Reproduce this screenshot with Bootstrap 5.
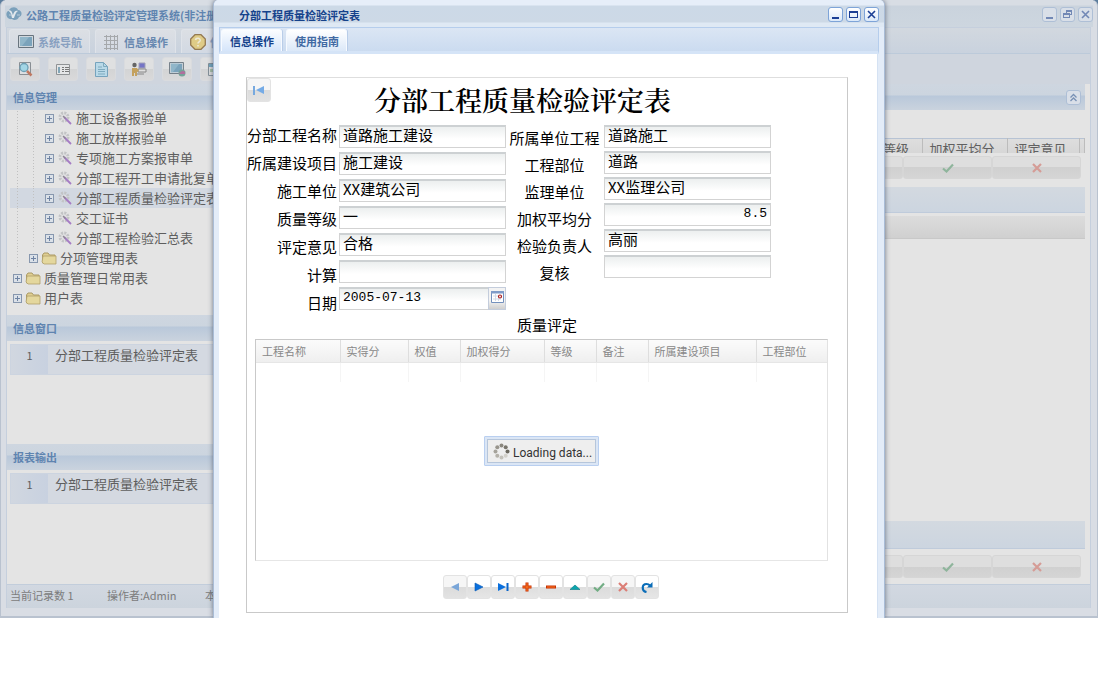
<!DOCTYPE html>
<html lang="zh-CN">
<head>
<meta charset="utf-8">
<meta name="viewport" content="width=device-width, initial-scale=1">
<title>分部工程质量检验评定表</title>
<link href="https://cdn.jsdelivr.net/npm/bootstrap@5.3.0/dist/css/bootstrap.min.css" rel="stylesheet">
<style>
body{font-family:"Noto Sans CJK SC","Noto Sans",sans-serif;font-size:11px;line-height:16px;background:#fff;color:#666}
button,input{font:inherit;border-radius:0}
ul,h1,h2{margin:0;padding:0;list-style:none}
svg{display:block;flex:none}
.desktop{display:grid;grid-template-columns:minmax(0,1fr);background:#5c7d9d}
.desktop>*{grid-area:1/1}

/* main window, dimmed */
.main-win{background:#d9dde4;border:1px solid #b9c2cf;border-width:0 1px 2px;border-radius:6px 6px 0 0;padding:0 6px 8px 5px}
.win-title{height:27px;font-weight:700;color:#5f84b0;background:linear-gradient(#d8dde4 0 5px,#cad3dd 6px,#cdd6df);margin:0 -2px 0 -1px;padding-left:1px}
.win-title>span,.dlg-title>span{padding-top:2px}
.tool-sq{width:15px;height:15px;border:1px solid #aebfd6;border-radius:3px;background:#d9dfe8;padding:0;display:grid;place-items:center}
.main-body{background:#e4e4e4;border:1px solid #c5cfdd;border-width:1px 1px 0;padding-right:5px}
.strip{height:26px;background:linear-gradient(#d2d8df,#c9d2de);border-bottom:1px solid #bccada;margin-right:-5px;padding-left:2px;gap:5px}
.tab-btn{height:24px;border:1px solid #dfe3e9;border-bottom:0;border-radius:3px 3px 0 0;background:linear-gradient(#dcdfe4,#d2d9e3);color:#88a0c0;font-weight:700;padding:0 7px 0 8px;margin-top:1px;gap:4px}
.tab-btn.on{color:#6788b0}
.tools{height:30px;background:#cfd5de;padding:3px 3px 0;margin-right:-5px}
.tool-btn{width:30px;height:24px;border:1px solid #d9dbde;border-radius:3px;background:linear-gradient(#dfe0e1 50%,#d3d4d5 50%,#d9d9da);padding:0;display:grid;place-items:center}
.side{width:236px;flex:none}
.bar{height:26px;font-size:11px;line-height:26px;font-weight:700;color:#5f84b0;padding:0 6px;background:linear-gradient(#ced6e0 0,#ccd5df 11px,#b9c8da 12px,#cad3de)}
.tree{height:205px;overflow:hidden;color:#5e5e5e;font-size:13px;white-space:nowrap}
.tree ul{margin-top:-2px}
.tree li{height:20px;line-height:20px;display:flex;align-items:center;gap:4px;margin-left:3px}
.tree li.l3{padding-left:35px;background:repeating-linear-gradient(#c0c0c0 0 1px,transparent 1px 3px) 7px 0/1px 20px no-repeat,repeating-linear-gradient(#c0c0c0 0 1px,transparent 1px 3px) 23px 0/1px 20px no-repeat}
.tree li.l2{padding-left:19px;background:repeating-linear-gradient(#c0c0c0 0 1px,transparent 1px 3px) 7px 0/1px 20px no-repeat}
.tree li.l1{padding-left:3px}
.tree li.pick{background-color:#d2d8e1}
.tree .fold{gap:3px}
.pm{width:9px;height:9px;border:1px solid #8797ae;background:linear-gradient(#6f83a3,#6f83a3) center/5px 1px no-repeat,linear-gradient(#6f83a3,#6f83a3) center/1px 5px no-repeat,#dbe1e8;flex:none}
.pane{height:103px;padding:3px 0 0 3px}
.pane-row{height:31px;background:#d4d9e1;border:1px solid #ccd4e0;font-size:13px;line-height:20px;color:#5e5e5e}
.pane-no{width:37px;background:linear-gradient(90deg,#d1d7e0,#c8d1e0);text-align:center;font-size:11px}
.pane-name{padding-left:7px}
.bar-foot{height:24px;line-height:21px;background:linear-gradient(#d2d8e1,#ccd4dd);border-top:1px solid #c2cddb;color:#7c7c7c;padding-left:3px;margin-right:-5px}
.foot-a{width:97px}.foot-b{width:98px}
.rest{min-width:0}
.cutgrid{width:202px;height:16px;border-top:1px solid #b7c3d4;background:linear-gradient(#dedede,#d4d4d4);font-size:13px;line-height:20px;color:#606060;table-layout:fixed;white-space:nowrap}
.cutgrid th{font-weight:400;padding:0 0 0 7px;border-right:1px solid #bcbcbc}
.cut-view{height:15px}
.wide-btn{width:89px;height:23px;border:1px solid #d6d6d6;border-radius:3px;background:linear-gradient(#dedede 50%,#d0d0d0 50%,#d5d5d5);display:grid;place-items:center;padding:0}
.wide-head{height:23px;background:linear-gradient(#dcdcdc,#d0d0d0);border-bottom:1px solid #c8c8c8;margin-top:3px}
.r-acts{margin:3px 4px 0 0}
.r-acts.low{margin:6px 4px 6px 0}
.bar-flat{background:linear-gradient(#d3d9e0,#ccd5e0);border-bottom:1px solid #bfcbdb}
.bar-flat.tall{height:28px}

/* dialog */
.dlg{justify-self:center;width:672px;max-width:100%;background:#e3ecf8;border:1px solid #a9bcd6;border-width:0 1px;border-radius:5px 5px 0 0;box-shadow:0 0 5px rgba(60,70,90,.7);clip-path:inset(0 -8px 0 -8px);padding:0 5px}
.dlg-title{height:27px;margin:0 -5px;padding:0 5px 0 25px;font-size:11px;line-height:16px;font-weight:700;color:#15428b;background:linear-gradient(#e6eef9 0 5px,#ccd9e7 6px,#cdd9e6 22px,#dfe9f4 23px);border-radius:5px 5px 0 0}
.dlg .tool-sq{border-color:#7ea4d8;background:linear-gradient(#fff,#dbe9f9)}
.dlg-tabs{height:27px;background:linear-gradient(#dbe6f4,#cbdbf0);border:1px solid #b5cdec;border-bottom:3px solid #d5e4f7;padding-left:1px}
.dlg-tabs .tab-btn{height:22px;margin-top:1px;border-color:#f6faff;background:linear-gradient(#fff,#dbe8f8);color:#416aa3;box-shadow:1px 0 0 #b9cde8}
.dlg-tabs .tab-btn.on{color:#15428b;background:linear-gradient(#fbfdff,#d5e5fa)}
.dlg-body{background:#fff;border-right:1px solid #d5e2f3;margin-right:1px;padding:23px 29px 5px 27px;color:#000}
.sheet{border:1px solid #c9c9c9;border-top-color:#dedede;height:536px}
.sheet-head{height:47px}
.nav-b{width:24px;height:24px;border:1px solid #e3e3e3;border-radius:3px;background:linear-gradient(#fff 52%,#dedede 52%,#e6e6e6);padding:0;display:grid;place-items:center}
.nav-b:disabled{background:linear-gradient(#f6f6f6 52%,#dcdcdc 52%,#e2e2e2)}
.sheet-title{font-family:"Noto Serif CJK SC","Noto Sans CJK SC",serif;font-size:27px;line-height:44px;font-weight:600;color:#000;padding-left:103px;white-space:nowrap}
.fields{font-size:15px;height:190px}
.fields label{height:20px;line-height:20px;white-space:nowrap}
.lab-l{width:92px;gap:8px;align-items:flex-end;padding-right:2px}
.lab-r{width:98px;gap:7px;align-items:center;padding-right:1px;margin-top:3px}
.in-l{width:167px;gap:4px}
.in-r{width:167px;gap:3px}
.txt{width:100%;height:23px;border:1px solid #d3d3d3;border-top:2px solid #cdd1d3;background:linear-gradient(#ecefef,#fff 12px);padding:0 3px 5px;font-size:15px;line-height:15px;color:#000;outline:0}
.txt.mono{font-family:"Liberation Mono","Noto Sans CJK SC",monospace;font-size:13px;padding-bottom:3px}
.date-box{border-right:1px solid #c4cddc}
.date-box .txt{border-right:0}
.pick-date{width:17px;height:23px;border:1px solid #c4cddc;border-width:1px 0 1px 1px;background:linear-gradient(#f3f3f3 60%,#cfcfcf);padding:3px 0 0;display:grid;place-items:start center;flex:none}
.sub-title{font-size:15px;line-height:20px;font-weight:400;padding-left:270px}
.grid-box{margin:4px 19px 0 8px;height:222px;border:1px solid #c9c9c9;border-right-color:#e2e2e2;border-bottom-color:#e6e6e6}
.data-grid{width:100%;table-layout:fixed;color:#888}
.data-grid th{height:22px;font-weight:400;line-height:16px;padding:0 0 0 6px;border-right:1px solid #dedede;border-bottom:1px solid #e6e6e6;background:linear-gradient(#fbfbfb,#efefef);white-space:nowrap}
.data-grid td{height:20px;padding:0;border-right:1px solid #f5f5f5}
.data-grid tr>:last-child{border-right:0}
.busy{width:115px;height:30px;margin:54px auto 0;border:1px solid #b9cff0;background:#dbe6f5;padding:2px;border-radius:1px}
.busy-in{height:24px;border:1px solid #b6c6db;background:#eee;color:#333;padding:0 0 0 5px;gap:3px}
.busy-in span{padding-top:3px;font-family:Roboto,"Noto Sans",sans-serif;font-size:12px;white-space:nowrap}
.pager{margin:14px 0 0 196px}
</style>
</head>
<body>
<svg width="0" height="0" class="d-none" aria-hidden="true">
<symbol id="i-min" viewBox="0 0 11 11"><path d="M2 8h7v2H2z" fill="currentColor"/></symbol>
<symbol id="i-max" viewBox="0 0 11 11"><path d="M1 2h9v7H1zM2 4v4h7V4z" fill="currentColor" fill-rule="evenodd"/></symbol>
<symbol id="i-res" viewBox="0 0 11 11"><path d="M4 1h6v5H8v3H1V4h3zM5 3v1h3v1h1V3zM2 6v2h5V6z" fill="currentColor" fill-rule="evenodd"/></symbol>
<symbol id="i-cls" viewBox="0 0 11 11"><path d="M2 2l7 7M9 2l-7 7" stroke="currentColor" stroke-width="1.6"/></symbol>
<symbol id="i-chk" viewBox="0 0 12 10"><path d="M1 5.5L4.5 8.500L11 1.500" fill="none" stroke="currentColor" stroke-width="2.2"/></symbol>
<symbol id="i-x" viewBox="0 0 10 10"><path d="M1 1l8 8M9 1L1 9" stroke="currentColor" stroke-width="2.2"/></symbol>
<symbol id="i-gear" viewBox="0 0 14 14"><circle cx="6" cy="6" r="4" fill="none" stroke="#c3c4c6" stroke-width="3" stroke-dasharray="2 1.1"/><circle cx="6" cy="6" r="2.500" fill="#e0e0e2"/><path d="M6 6l7 7" stroke="#a57cc4" stroke-width="1.800"/><path d="M5 5l2.500 2.500" stroke="#8d8a92" stroke-width="1.200"/></symbol>
<symbol id="i-fold" viewBox="0 0 16 13"><path d="M1.500 11V3l1.500-2h4L8.500 3H14v8z" fill="#e0cf92" stroke="#ab9a65"/><path d="M2 4h13v8H3L1 10z" fill="#e4d79d" stroke="#b09f6a" stroke-width=".8"/></symbol>
<symbol id="i-scr" viewBox="0 0 16 13"><path d="M.5.5h15v12H.5z" fill="#d0d7dd" stroke="#68747e"/><path d="M2 2h12v9H2z" fill="#7ba3bb"/><path d="M2 2h9L4 11H2z" fill="#91b6c9"/></symbol>
</svg>

<div class="desktop">
 <div class="main-win d-flex flex-column">
  <header class="win-title d-flex align-items-center gap-1">
   <svg width="16" height="15" viewBox="0 0 16 15"><path d="M3 4C6 0 11 1 12 4c4 0 5 6 1 7-1 3-5 4-7 2C2 14-1 9 1 6z" fill="#7ba0bb"/><path d="M1.500 4.500C6 3 6 7 7 9c1-4 3-5 5-4-2 1-3 4-4 7H6C5 8 5 6 1.500 4.500z" fill="#e2e8ed"/><path d="M3 9h3M11 9h3" stroke="#b7cad8"/></svg>
   <span class="flex-fill text-nowrap">公路工程质量检验评定管理系统(非注册</span>
   <span class="d-flex" style="color:#7288b5;gap:3px">
    <button class="tool-sq" style="color:inherit" aria-label="最小化"><svg width="11" height="11"><use href="#i-min"/></svg></button>
    <button class="tool-sq" style="color:inherit" aria-label="还原"><svg width="11" height="11"><use href="#i-res"/></svg></button>
    <button class="tool-sq" style="color:inherit" aria-label="关闭"><svg width="11" height="11"><use href="#i-cls"/></svg></button>
   </span>
  </header>
  <div class="main-body flex-fill d-flex flex-column">
   <nav class="strip d-flex" aria-label="主导航">
    <button class="tab-btn d-flex align-items-center"><svg width="16" height="13"><use href="#i-scr"/></svg>系统导航</button>
    <button class="tab-btn on d-flex align-items-center"><svg width="16" height="16" viewBox="0 0 16 16"><path d="M0 2.500h14M0 6.500h14M0 10.500h14M0 14.500h14M2.500 1v15M6.500 1v15M10.500 1v15M13.500 1v15" stroke="#a5a8ab" fill="none"/></svg>信息操作</button>
    <button class="tab-btn d-flex align-items-center" aria-label="使用指南"><svg width="16" height="16" viewBox="0 0 16 16"><path d="M5 .7h6L15.300 5v6L11 15.300H5L.7 11V5z" fill="#dfcb86" stroke="#957a51" stroke-width="1.300"/><path d="M5.500 6C6 3 11 4 10 7c-.5 1-2 1-2 2.500M8 11v1.500" stroke="#eee9d7" stroke-width="1.600" fill="none"/></svg>使</button>
   </nav>
   <div class="tools d-flex gap-2">
    <button class="tool-btn" aria-label="查询"><svg width="16" height="16" viewBox="0 0 16 16"><path d="M2.500 1.500h11v12h-11z" fill="#dcdfe2" stroke="#898e93"/><circle cx="7" cy="6.500" r="4" fill="#a3d6e6" stroke="#6d9fb4" stroke-width="1.300"/><path d="M10 10l4.500 4.500" stroke="#bf7861" stroke-width="2.500"/></svg></button>
    <button class="tool-btn" aria-label="列表"><svg width="15" height="13" viewBox="0 0 15 13"><path d="M.5 1.500h13v10H.5z" fill="#e5e6e7" stroke="#909395"/><path d="M2 4h2v6H2z" fill="#82a5b6"/><path d="M6 4.500h2m1 0h4m-7 2h2m1 0h4m-7 2h2m1 0h4" stroke="#777"/></svg></button>
    <button class="tool-btn" aria-label="文档"><svg width="13" height="15" viewBox="0 0 13 15"><path d="M.5.5h8l4 4v10H.5z" fill="#b9d9e8" stroke="#76a3bd"/><path d="M8.500.5v4h4M3 5h4M3 7.500h7M3 9.500h7M3 12h7" stroke="#7fabbf" fill="none"/></svg></button>
    <button class="tool-btn" aria-label="操作员"><svg width="16" height="16" viewBox="0 0 16 16"><path d="M8 2h6v5H8z" fill="#7474c6" stroke="#a0a0b7"/><path d="M7 8h8v3H7zM6 13h7" fill="#e0e0e0" stroke="#888"/><circle cx="3.500" cy="4" r="2.200" fill="#656565"/><path d="M1 7h5l2 3-2 1v4H4v-3H3v3H1z" fill="#c4a15d"/></svg></button>
    <button class="tool-btn" aria-label="屏幕"><svg width="17" height="16" viewBox="0 0 17 16"><use href="#i-scr" width="15" height="12" y="1"/><circle cx="13" cy="12" r="3.500" fill="#74a398"/><path d="M10 13c2-3 4-4 6-2v2z" fill="#b16e9d"/></svg></button>
    <button class="tool-btn" aria-label="窗体"><svg width="14" height="13" viewBox="0 0 14 13"><path d="M.5.5h13v12H.5z" fill="#ddd" stroke="#849098"/><path d="M1 1h12v3H1z" fill="#72a5bd"/><path d="M2 6h10v3H2z" fill="#a6bea6"/></svg></button>
   </div>
   <div class="d-flex flex-fill">
    <aside class="side">
     <h2 class="bar">信息管理</h2>
     <div class="tree"><ul>
      <li class="l3"><i class="pm"></i><svg width="14" height="14"><use href="#i-gear"/></svg>施工设备报验单</li>
      <li class="l3"><i class="pm"></i><svg width="14" height="14"><use href="#i-gear"/></svg>施工放样报验单</li>
      <li class="l3"><i class="pm"></i><svg width="14" height="14"><use href="#i-gear"/></svg>专项施工方案报审单</li>
      <li class="l3"><i class="pm"></i><svg width="14" height="14"><use href="#i-gear"/></svg>分部工程开工申请批复单</li>
      <li class="l3 pick"><i class="pm"></i><svg width="14" height="14"><use href="#i-gear"/></svg>分部工程质量检验评定表</li>
      <li class="l3"><i class="pm"></i><svg width="14" height="14"><use href="#i-gear"/></svg>交工证书</li>
      <li class="l3"><i class="pm"></i><svg width="14" height="14"><use href="#i-gear"/></svg>分部工程检验汇总表</li>
      <li class="l2 fold"><i class="pm"></i><svg width="16" height="13"><use href="#i-fold"/></svg>分项管理用表</li>
      <li class="l1 fold"><i class="pm"></i><svg width="16" height="13"><use href="#i-fold"/></svg>质量管理日常用表</li>
      <li class="l1 fold"><i class="pm"></i><svg width="16" height="13"><use href="#i-fold"/></svg>用户表</li>
     </ul></div>
     <h2 class="bar">信息窗口</h2>
     <div class="pane"><div class="pane-row d-flex"><span class="pane-no">1</span><span class="pane-name">分部工程质量检验评定表</span></div></div>
     <h2 class="bar">报表输出</h2>
     <div class="pane"><div class="pane-row d-flex"><span class="pane-no">1</span><span class="pane-name">分部工程质量检验评定表</span></div></div>
    </aside>
    <section class="rest flex-fill d-flex flex-column">
     <div class="bar d-flex align-items-center justify-content-end px-0"><button class="tool-sq me-1" style="color:#7891b5" aria-label="收起"><svg width="9" height="9" viewBox="0 0 9 9"><path d="M1.500 4.500l3-3 3 3M1.500 8l3-3 3 3" fill="none" stroke="currentColor" stroke-width="1.300"/></svg></button></div>
     <div class="d-flex justify-content-end mt-4 pt-1"><div class="cut-view overflow-hidden"><table class="cutgrid"><thead><tr><th class="ps-0" style="width:39px">等级</th><th style="width:85px">加权平均分</th><th style="width:72px">评定意见</th><th></th></tr></thead></table></div></div>
     <div class="r-acts d-flex justify-content-end">
      <button class="wide-btn" aria-label="编辑"></button>
      <button class="wide-btn" style="color:#8fb59c" aria-label="保存"><svg width="12" height="10"><use href="#i-chk"/></svg></button>
      <button class="wide-btn" style="color:#d59c96" aria-label="取消"><svg width="10" height="10"><use href="#i-x"/></svg></button>
     </div>
     <div class="bar bar-flat mt-2"></div>
     <div class="wide-head"></div>
     <div class="flex-fill"></div>
     <div class="bar bar-flat tall"></div>
     <div class="r-acts low d-flex justify-content-end">
      <button class="wide-btn" aria-label="编辑"></button>
      <button class="wide-btn" style="color:#8fb59c" aria-label="保存"><svg width="12" height="10"><use href="#i-chk"/></svg></button>
      <button class="wide-btn" style="color:#d59c96" aria-label="取消"><svg width="10" height="10"><use href="#i-x"/></svg></button>
     </div>
    </section>
   </div>
   <footer class="bar-foot d-flex text-nowrap"><span class="foot-a">当前记录数 1</span><span class="foot-b">操作者:Admin</span><span>本</span></footer>
  </div>
 </div>

 <main class="dlg" role="dialog" aria-label="分部工程质量检验评定表">
  <header class="dlg-title d-flex align-items-center">
   <span class="flex-fill">分部工程质量检验评定表</span>
   <span class="d-flex" style="gap:3px">
    <button class="tool-sq" style="color:#1b3f95" aria-label="最小化"><svg width="11" height="11"><use href="#i-min"/></svg></button>
    <button class="tool-sq" style="color:#1b3f95" aria-label="最大化"><svg width="11" height="11"><use href="#i-max"/></svg></button>
    <button class="tool-sq" style="color:#1b3f95" aria-label="关闭"><svg width="11" height="11"><use href="#i-cls"/></svg></button>
   </span>
  </header>
  <nav class="dlg-tabs d-flex gap-1" aria-label="表单页">
   <button class="tab-btn on">信息操作</button>
   <button class="tab-btn">使用指南</button>
  </nav>
  <div class="dlg-body">
   <form class="sheet">
    <div class="sheet-head d-flex align-items-start">
     <button type="button" class="nav-b" disabled aria-label="首条"><svg width="12" height="10" viewBox="0 0 12 10"><path d="M0 1h2v9H0z" fill="#77a9df"/><path d="M11 1v8L3 5z" fill="#75abe6"/></svg></button>
     <h1 class="sheet-title">分部工程质量检验评定表</h1>
    </div>
    <div class="fields d-flex align-items-start">
     <div class="lab-l d-flex flex-column">
      <label for="a1">分部工程名称</label><label for="a2">所属建设项目</label><label for="a3">施工单位</label><label for="a4">质量等级</label><label for="a5">评定意见</label><label for="a6">计算</label><label for="a7">日期</label>
     </div>
     <div class="in-l d-flex flex-column">
      <input class="txt" id="a1" value="道路施工建设"><input class="txt" id="a2" value="施工建设"><input class="txt" id="a3" value="XX建筑公司"><input class="txt" id="a4" value="一"><input class="txt" id="a5" value="合格"><input class="txt" id="a6">
      <div class="date-box d-flex"><input class="txt mono" id="a7" value="2005-07-13"><button type="button" class="pick-date" aria-label="选择日期"><svg width="13" height="13" viewBox="0 0 13 13"><path d="M.5.5h12v11H.5z" fill="#fff" stroke="#7390bd"/><path d="M0 0h13v2.500H0z" fill="#7e9bc8"/><path d="M2 5h5M2 8h8M4.500 3v7M7.500 7v3" stroke="#d2dae7"/><circle cx="9" cy="5.500" r="1.500" fill="#fff" stroke="#a91e1e" stroke-width="1.200"/></svg></button></div>
     </div>
     <div class="lab-r d-flex flex-column">
      <label for="b1">所属单位工程</label><label for="b2">工程部位</label><label for="b3">监理单位</label><label for="b4">加权平均分</label><label for="b5">检验负责人</label><label for="b6">复核</label>
     </div>
     <div class="in-r d-flex flex-column">
      <input class="txt" id="b1" value="道路施工"><input class="txt" id="b2" value="道路"><input class="txt" id="b3" value="XX监理公司"><input class="txt mono text-end" id="b4" value="8.5"><input class="txt" id="b5" value="高丽"><input class="txt" id="b6">
     </div>
    </div>
    <h2 class="sub-title">质量评定</h2>
    <div class="grid-box">
     <table class="data-grid">
      <thead><tr><th style="width:84px">工程名称</th><th style="width:68px">实得分</th><th style="width:52px">权值</th><th style="width:84px">加权得分</th><th style="width:52px">等级</th><th style="width:52px">备注</th><th style="width:108px">所属建设项目</th><th>工程部位</th></tr></thead>
      <tbody><tr><td></td><td></td><td></td><td></td><td></td><td></td><td></td><td></td></tr></tbody>
     </table>
     <div class="busy"><div class="busy-in d-flex align-items-center" role="status"><svg width="17" height="17" viewBox="0 0 17 17"><g fill="#8a877e"><circle cx="8.500" cy="2.500" r="2"/><circle cx="12.700" cy="4.300" r="2" fill="#77746b"/><circle cx="14.500" cy="8.500" r="2" fill="#6b685f"/><circle cx="12.700" cy="12.700" r="2" fill="#d3d1cb"/><circle cx="8.500" cy="14.500" r="2" fill="#c3c1ba"/><circle cx="4.300" cy="12.700" r="2" fill="#b5b2aa"/><circle cx="2.500" cy="8.500" r="2" fill="#a6a39b"/><circle cx="4.300" cy="4.300" r="2" fill="#98958d"/></g></svg><span>Loading data...</span></div></div>
    </div>
    <div class="pager d-flex">
     <button type="button" class="nav-b" disabled aria-label="上一条"><svg width="10" height="10" viewBox="0 0 10 10"><path d="M9 1v8L1 5z" fill="#7aa6d8"/></svg></button>
     <button type="button" class="nav-b" aria-label="下一条"><svg width="10" height="10" viewBox="0 0 10 10"><path d="M1 1v8l8-4z" fill="#0b70dd" stroke="#0757b2" stroke-width=".6"/></svg></button>
     <button type="button" class="nav-b" aria-label="末条"><svg width="12" height="10" viewBox="0 0 12 10"><path d="M1 1v8l8-4z" fill="#0b70dd"/><path d="M9.500 1h2v8h-2z" fill="#0965cb"/></svg></button>
     <button type="button" class="nav-b" aria-label="新增"><svg width="10" height="10" viewBox="0 0 10 10"><path d="M5 .5v9M.5 5h9" stroke="#c72f00" stroke-width="3"/><path d="M5 1v8M1 5h8" stroke="#ff7a25"/></svg></button>
     <button type="button" class="nav-b" aria-label="删除"><svg width="10" height="10" viewBox="0 0 10 10"><path d="M0 5h10" stroke="#c72f00" stroke-width="3"/><path d="M1 5h8" stroke="#ff7a25"/></svg></button>
     <button type="button" class="nav-b" aria-label="修改"><svg width="10" height="10" viewBox="0 0 10 10"><path d="M0 7.500L5 3l5 4.500z" fill="#0ba5ad" stroke="#077984" stroke-width=".6"/></svg></button>
     <button type="button" class="nav-b" disabled style="color:#72ad84" aria-label="保存"><svg width="12" height="10"><use href="#i-chk"/></svg></button>
     <button type="button" class="nav-b" disabled style="color:#dc7e76" aria-label="取消"><svg width="10" height="10"><use href="#i-x"/></svg></button>
     <button type="button" class="nav-b" aria-label="刷新"><svg width="12" height="12" viewBox="0 0 12 12"><path d="M5.500 11C.5 10 .5 3 5.500 3c2 0 2.500.5 3.500 1.500" fill="none" stroke="#0a6db8" stroke-width="2.200"/><path d="M6 6.500h5.500V1z" fill="#0a6db8"/></svg></button>
    </div>
   </form>
  </div>
 </main>
</div>
<script src="https://cdn.jsdelivr.net/npm/bootstrap@5.3.0/dist/js/bootstrap.bundle.min.js"></script>
</body>
</html>
